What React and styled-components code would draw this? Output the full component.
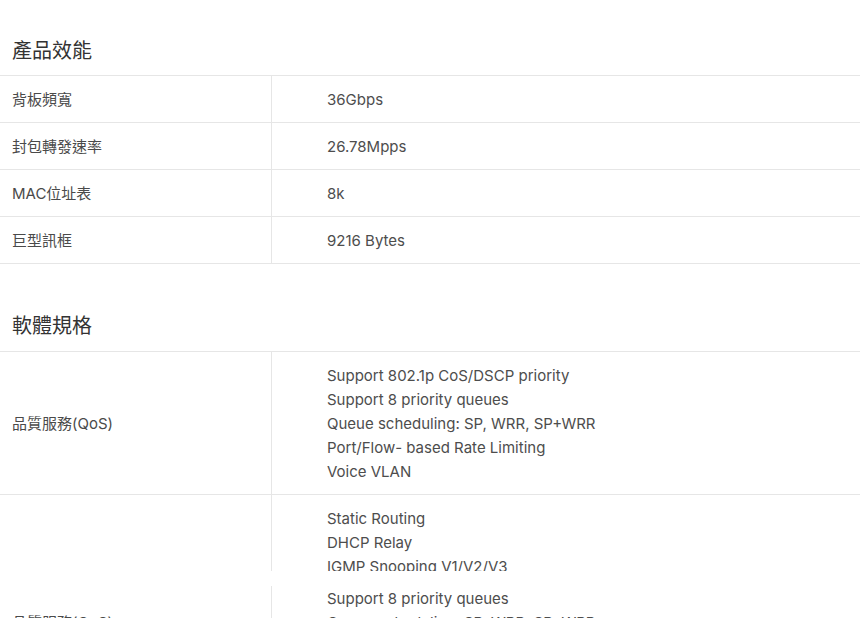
import React from 'react';
import styled, { createGlobalStyle } from 'styled-components';

const GlobalStyle = createGlobalStyle`
  html, body {
    margin: 0;
    padding: 0;
    background: #fff;
  }
  body {
    font-family: Inter, "Noto Sans CJK TC", sans-serif;
    color: #4a4a4a;
    overflow: hidden;
  }
`;

const Page = styled.div`
  width: 860px;
  height: 618px;
  overflow: hidden;
`;

const Section = styled.section`
  & + & {
    margin-top: 12px;
  }
`;

const Heading = styled.h2`
  margin: 0;
  height: 75px;
  box-sizing: border-box;
  padding: ${props => props.top || 36}px 12px 0;
  font-size: 20px;
  line-height: 28px;
  font-weight: 400;
  color: #333;
  font-family: "Noto Sans CJK TC", sans-serif;
`;

const Table = styled.div`
  border-top: 1px solid #e6e6e6;
`;

const Row = styled.div`
  display: grid;
  grid-template-columns: 272px 1fr;
  border-bottom: 1px solid #e6e6e6;
  ${props => props.clip && `
    height: ${props.clip}px;
    overflow: hidden;
    border-bottom: none;
  `}
`;

const Label = styled.div`
  display: flex;
  align-items: center;
  padding: 1px 12px 0;
  border-right: 1px solid #e6e6e6;
  font-size: 15px;
  line-height: 24px;
  color: #4a4a4a;
`;

const Value = styled.div`
  padding: 12px 55px 10px;
  font-size: 15px;
  line-height: 24px;
  color: #4d4d4d;
`;

const Line = styled.div``;

/* the lower part of the capture is a torn repaint: a slice of the QoS row again */
const Torn = styled.div`
  margin-top: 15px;
  height: 40px;
  overflow: hidden;
`;

const Shift = styled.div`
  margin-top: ${props => -props.offset}px;
`;

const performance = [
  ['背板頻寬', '36Gbps'],
  ['封包轉發速率', '26.78Mpps'],
  ['MAC位址表', '8k'],
  ['巨型訊框', '9216 Bytes'],
];

const qos = [
  'Support 802.1p CoS/DSCP priority',
  'Support 8 priority queues',
  'Queue scheduling: SP, WRR, SP+WRR',
  'Port/Flow- based Rate Limiting',
  'Voice VLAN',
];

const routing = ['Static Routing', 'DHCP Relay', 'IGMP Snooping V1/V2/V3', 'MLD Snooping'];

const SpecRow = ({ label, lines, clip }) => (
  <Row clip={clip}>
    <Label>{label}</Label>
    <Value>
      {lines.map(l => <Line key={l}>{l}</Line>)}
    </Value>
  </Row>
);

const App = () => (
  <Page>
    <GlobalStyle />
    <Section>
      <Heading>產品效能</Heading>
      <Table>
        {performance.map(([k, v]) => (
          <SpecRow key={k} label={k} lines={[v]} />
        ))}
      </Table>
    </Section>
    <Section>
      <Heading top={35}>軟體規格</Heading>
      <Table>
        <SpecRow label="品質服務(QoS)" lines={qos} />
        <SpecRow label="" lines={routing} clip={76} />
      </Table>
      <Torn>
        <Shift offset={35}>
          <SpecRow label="品質服務(QoS)" lines={qos} />
        </Shift>
      </Torn>
    </Section>
  </Page>
);

export default App;
